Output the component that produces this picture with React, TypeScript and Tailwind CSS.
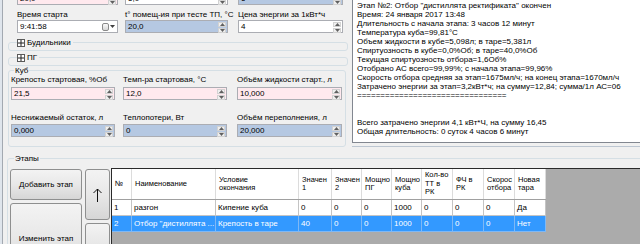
import React from "react";

/** маленькие стрелки спина (NumericUpDown) */
function Spin() {
  return (
    <div className="my-[1px] mr-[1px] flex w-[8px] shrink-0 flex-col gap-[1px]">
      <div className="flex flex-1 items-center justify-center border border-[#d2d2d2] bg-[#efefef]">
        <svg width="5" height="3" viewBox="0 0 5 3">
          <path d="M0 3 L2.5 0 L5 3Z" fill="#606060" />
        </svg>
      </div>
      <div className="flex flex-1 items-center justify-center border border-[#d2d2d2] bg-[#efefef]">
        <svg width="5" height="3" viewBox="0 0 5 3">
          <path d="M0 0 L2.5 3 L5 0Z" fill="#606060" />
        </svg>
      </div>
    </div>
  );
}

function Input({
  value,
  className,
  children,
}: {
  value: string;
  className: string;
  children?: React.ReactNode;
}) {
  return (
    <div className={`flex h-[13px] shrink-0 items-stretch border border-[#abadb3] ${className}`}>
      <span className="flex-1 overflow-hidden whitespace-nowrap pl-[2px] leading-[11px]">{value}</span>
      {children ?? <Spin />}
    </div>
  );
}

/** свёрнутый groupbox с плюсиком */
function Collapsed({ title, className }: { title: string; className: string }) {
  return (
    <fieldset className={`ml-[5px] h-[13px] w-[340px] rounded-[3px] border border-[#d5dfe5] ${className}`}>
      <legend className="ml-[8px] flex items-center gap-[2px] pr-[2px]">
        <span className="flex h-[8px] w-[8px] items-center justify-center border border-[#5a5a5a] bg-white">
          <svg width="6" height="6" viewBox="0 0 6 6">
            <path d="M0 3 H6 M3 0 V6" stroke="#222" strokeWidth="1" />
          </svg>
        </span>
        <span>{title}</span>
      </legend>
    </fieldset>
  );
}

function LeftPanel() {
  return (
    <div className="flex w-[347px] shrink-0 flex-col">
      {/* верхний ряд, обрезан сверху */}
      <div className="ml-[14px] mt-[-8px] flex">
        <Input value="20,0" className="w-[101px] bg-[#ffe9ee]" />
        <Input value="5,0" className="ml-[7px] w-[103px] bg-white" />
        <Input value="6" className="ml-[10px] w-[105px] bg-[#b5c8e2]" />
      </div>
      <div className="ml-[14px] mt-[5px] flex">
        <span className="w-[108px]">Время старта</span>
        <span className="w-[113px]">t° помещ-ия при тесте ТП, °C</span>
        <span>Цена энергии за 1кВт*ч</span>
      </div>
      <div className="ml-[14px] mt-[1px] flex">
        <Input value="9:41:58" className="w-[101px] bg-white">
          <div className="mr-[2px] flex items-center gap-[1px]">
            <span className="h-[8px] w-[7px] rounded-[2px] border border-[#8a8a8a] bg-gradient-to-b from-[#fafafa] to-[#d8d8d8]" />
            <svg width="5" height="3" viewBox="0 0 5 3">
              <path d="M0 0 L2.5 3 L5 0Z" fill="#404040" />
            </svg>
          </div>
        </Input>
        <Input value="20,0" className="ml-[7px] w-[103px] bg-[#b5c8e2]" />
        <Input value="4" className="ml-[10px] w-[105px] bg-white" />
      </div>
      <Collapsed title="Будильники" className="mt-[5px]" />
      <Collapsed title="ПГ" className="mt-[2px]" />
      {/* Куб */}
      <fieldset className="ml-[5px] w-[338px] rounded-[3px] border border-[#d5dfe5] pb-[9px] pl-[2px]">
        <legend className="ml-[3px] px-[1px]">Куб</legend>
        <div className="flex">
          <span className="w-[112px]">Крепость стартовая, %Об</span>
          <span className="w-[114px]">Темп-ра стартовая, °C</span>
          <span>Объём жидкости старт., л</span>
        </div>
        <div className="mt-[3px] flex">
          <Input value="21,5" className="w-[104px] bg-[#ffe9ee]" />
          <Input value="12,0" className="ml-[8px] w-[104px] bg-[#ffe9ee]" />
          <Input value="10,000" className="ml-[10px] w-[105px] bg-[#ffe9ee]" />
        </div>
        <div className="mt-[13px] flex">
          <span className="w-[112px]">Неснижаемый остаток, л</span>
          <span className="w-[114px]">Теплопотери, Вт</span>
          <span>Объём переполнения, л</span>
        </div>
        <div className="mt-[2px] flex">
          <Input value="0,000" className="w-[104px] bg-[#b5c8e2]" />
          <Input value="0" className="ml-[8px] w-[104px] bg-[#b5c8e2]" />
          <Input value="20,000" className="ml-[10px] w-[105px] bg-[#b5c8e2]" />
        </div>
      </fieldset>
    </div>
  );
}

const LOG = [
  'Этап №2: Отбор "дистиллята ректификата" окончен',
  "Время: 24 января 2017 13:48",
  "Длительность с начала этапа: 3 часов 12 минут",
  "Температура куба=99,81°C",
  "Объем жидкости в кубе=5,098л; в таре=5,381л",
  "Спиртуозность в кубе=0,0%Об; в таре=40,0%Об",
  "Текущая спиртуозность отбора=1,6Об%",
  "Отобрано АС всего=99,99%; с начала этапа=99,96%",
  "Скорость отбора средняя за этап=1675мл/ч; на конец этапа=1670мл/ч",
  "Затрачено энергии за этап=3,2кВт*ч; на сумму=12,84; сумма/1л АС=06",
  "================================",
  "",
  "",
  "Всего затрачено энергии 4,1 кВт*Ч, на сумму 16,45",
  "Общая длительность: 0 суток 4 часов 6 минут",
];

function LogBox() {
  return (
    <div className="ml-[2px] flex flex-col">
      <div className="h-[143px] w-[300px] border-b border-l border-[#828790] bg-white pl-[4px] pt-[1px]">
        {LOG.map((line, i) => (
          <div key={i} className="h-[9px] whitespace-nowrap">
            {line}
          </div>
        ))}
      </div>
      <div className="h-[4px] w-[300px] border-b border-[#bcc6d1]" />
    </div>
  );
}

function Btn({ className, children }: { className: string; children: React.ReactNode }) {
  return (
    <div
      className={`flex shrink-0 items-center justify-center rounded-[3px] border border-[#8e8f8f] bg-gradient-to-b from-[#f3f3f3] via-[#e8e8e8] to-[#d6d6d6] ${className}`}
    >
      {children}
    </div>
  );
}

const COLS = [
  { w: "w-[20px]", h: "№" },
  { w: "w-[84px]", h: "Наименование" },
  { w: "w-[83px]", h: "Условие\nокончания" },
  { w: "w-[33px]", h: "Значен\n1" },
  { w: "w-[30px]", h: "Значен\n2" },
  { w: "w-[30px]", h: "Мощно\nПГ" },
  { w: "w-[30px]", h: "Мощно\nкуба" },
  { w: "w-[31px]", h: "Кол-во\nТТ в\nРК" },
  { w: "w-[31px]", h: "ФЧ в\nРК" },
  { w: "w-[31px]", h: "Скорос\nотбора" },
  { w: "w-[31px]", h: "Новая\nтара" },
];

const ROWS = [
  ["1", "разгон", "Кипение куба", "0", "0", "0", "1000", "0", "0", "0", "Да"],
  ["2", 'Отбор "дистиллята ...', "Крепость в таре", "40", "0", "0", "1000", "0", "0", "0", "Нет"],
];

function Grid() {
  return (
    <div className="ml-[1px] mt-[5px] h-[90px] flex-1 overflow-hidden border-l border-t border-[#2a2a2a] bg-[#ababab]">
      <div className="flex w-max border-b border-[#a0a0a0] bg-white">
        {COLS.map((c, i) => (
          <div
            key={i}
            className={`flex h-[30px] shrink-0 items-center overflow-hidden whitespace-pre-line border-r border-[#dcdcdc] pl-[3px] text-[7.5px] leading-[8.5px] ${c.w}`}
          >
            {c.h}
          </div>
        ))}
      </div>
      {ROWS.map((r, ri) => (
        <div
          key={ri}
          className={`flex w-max ${ri === 1 ? "bg-[#3399ff] text-white" : "bg-white"}`}
        >
          {r.map((v, i) => (
            <div
              key={i}
              className={`flex h-[16px] shrink-0 items-center overflow-hidden whitespace-nowrap border-b border-r pl-[2px] ${
                ri === 1 ? "border-[#7fb8f5]" : "border-[#c4c4c4]"
              } ${COLS[i].w}`}
            >
              {v}
            </div>
          ))}
        </div>
      ))}
    </div>
  );
}

function Stages() {
  return (
    <fieldset className="ml-[4px] mt-[7px] h-[120px] w-[660px] rounded-[3px] border border-[#d5dfe5] pl-[2px]">
      <legend className="ml-[4px] px-[1px]">Этапы</legend>
      <div className="flex items-start">
        <div className="mt-[6px] flex w-[72px] shrink-0 flex-col gap-[3px]">
          <Btn className="h-[31px]">Добавить этап</Btn>
          <Btn className="h-[70px]">Изменить этап</Btn>
        </div>
        <div className="ml-[3px] mt-[6px] flex w-[25px] shrink-0 flex-col gap-[3px]">
          <Btn className="h-[51px]">
            <svg width="9" height="14" viewBox="0 0 9 14">
              <path d="M4.5 1 V14 M0.5 5 L4.5 1 L8.5 5" stroke="#111" strokeWidth="1" fill="none" />
            </svg>
          </Btn>
          <Btn className="h-[40px]">{null}</Btn>
        </div>
        <div className="flex w-[530px] shrink-0">
          <Grid />
        </div>
      </div>
    </fieldset>
  );
}

export default function App() {
  return (
    <div className="flex h-[244px] w-[640px] overflow-hidden bg-[#f0f0f0] font-['Liberation_Sans',Arial,sans-serif] text-[8px] leading-[9px] text-black">
      <div className="w-[3px] shrink-0 border-r border-[#a3a9b1] bg-[#dfe5ec]" />
      <div className="flex w-[637px] shrink-0 flex-col">
        <div className="flex h-[147px] shrink-0">
          <LeftPanel />
          <LogBox />
        </div>
        <Stages />
      </div>
    </div>
  );
}
